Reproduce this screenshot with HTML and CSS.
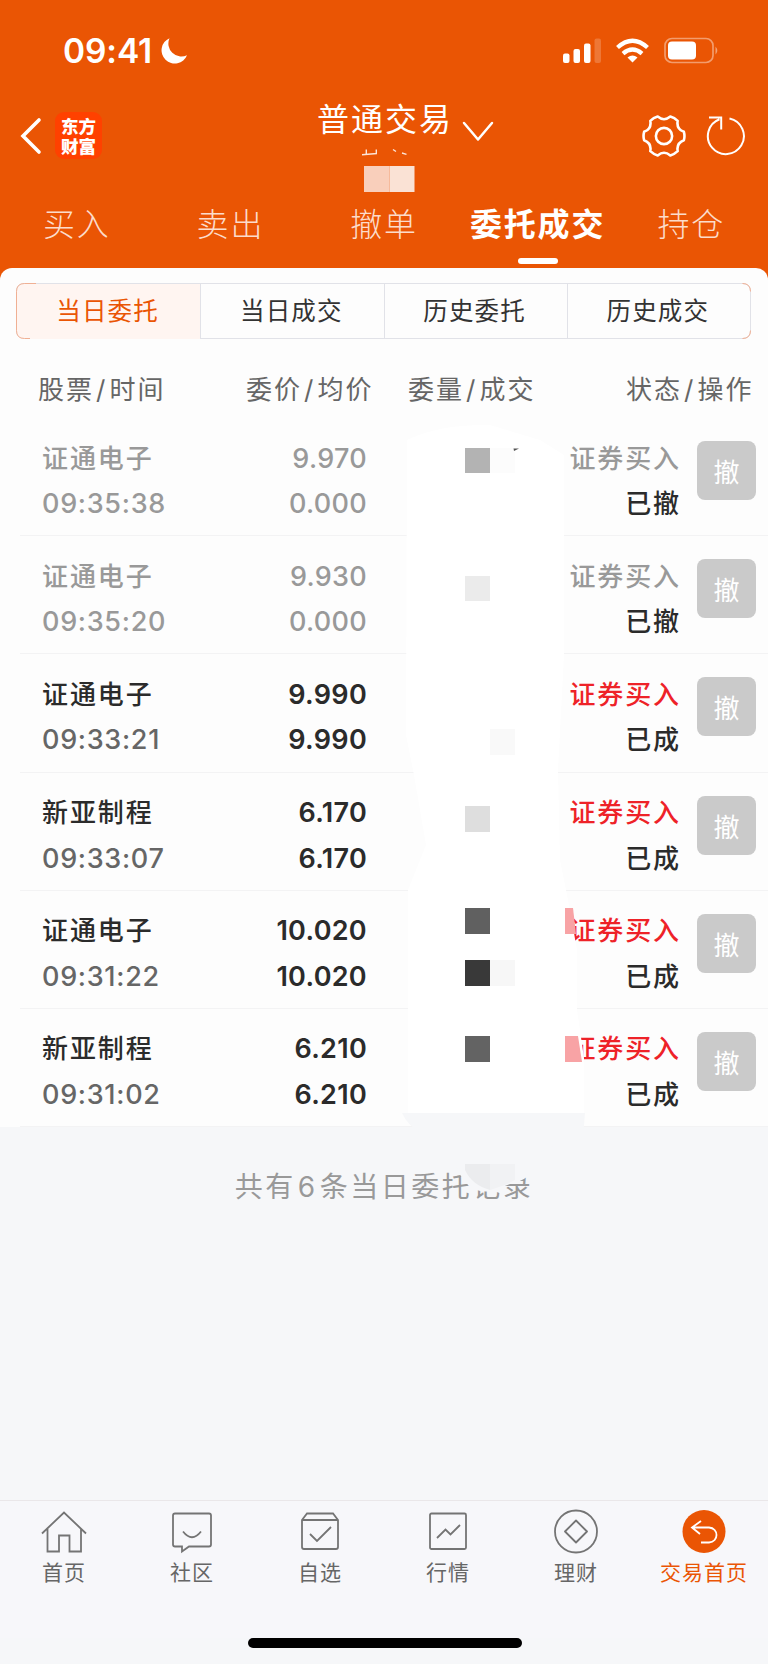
FILE: index.html
```html
<!DOCTYPE html>
<html lang="zh-CN">
<head>
<meta charset="utf-8">
<title>普通交易</title>
<link rel="stylesheet" href="styles.css">
</head>
<body>
<div class="app">
  <header class="top">
    <div class="status">
      <span class="clock">09:41</span>
      <svg class="moon" width="28" height="28" viewBox="0 0 28 28"><path d="M9.5 1.2A13.2 13.2 0 1 0 27 18.200A13 13 0 0 1 9.500 1.200Z" fill="#fff"/></svg>
      <svg class="signals" width="160" height="28" viewBox="0 0 160 28">
        <g fill="#fff">
          <rect x="3" y="16.500" width="6.500" height="9.500" rx="2"/>
          <rect x="13.500" y="12" width="6.500" height="14" rx="2"/>
          <rect x="24" y="6.500" width="6.500" height="19.500" rx="2"/>
          <rect x="34.500" y="1.500" width="6.500" height="24.500" rx="2" opacity=".2"/>
          <path d="M72.500 25.500L67.500 20.500Q72.500 16.300 77.500 20.500Z"/>
        </g>
        <g fill="none" stroke="#fff" stroke-width="4.300">
          <path d="M57.500 10.500Q72.500-3 87.500 10.500"/>
          <path d="M63 16.600Q72.500 8.500 82 16.600"/>
        </g>
        <rect x="105" y="1.500" width="48" height="24" rx="7" fill="none" stroke="#fff" stroke-width="1.700" opacity=".42"/>
        <rect x="108" y="4.500" width="28" height="18" rx="4" fill="#fff"/>
        <path d="M155.500 9.500Q159 13.500 155.500 17.500Z" fill="#fff" opacity=".45"/>
      </svg>
    </div>
    <div class="nav">
      <svg class="back" width="22" height="38" viewBox="0 0 22 38"><path d="M19 3L3 19L19 35" fill="none" stroke="#fff" stroke-width="3.600" stroke-linecap="round"/></svg>
      <div class="logo">东方<br>财富</div>
      <div class="title">
        <span>普通交易</span>
        <svg width="32" height="22" viewBox="0 0 32 22"><path d="M2 2L16 18.500L30 2" fill="none" stroke="#fff" stroke-width="2.500" stroke-linecap="round" stroke-linejoin="round"/></svg>
      </div>
      <svg class="gear" width="44" height="44" viewBox="0 0 46 46"><g fill="none" stroke="#fff" stroke-width="2.700" stroke-linejoin="round"><circle cx="23" cy="23" r="8.500"/><path d="M43.800 18.600Q45 23 43.800 27.400Q35.800 30.400 37.300 38.800Q34 42 29.600 43.300Q23 37.800 16.400 43.300Q12 42 8.700 38.800Q10.200 30.400 2.200 27.400Q1 23 2.200 18.600Q10.200 15.600 8.700 7.200Q12 4 16.400 2.700Q23 8.200 29.600 2.700Q34 4 37.300 7.200Q35.800 15.600 43.800 18.600Z"/></g></svg>
      <svg class="refresh" width="42" height="42" viewBox="0 0 42 42"><path d="M24.500 3.500A18 18 0 1 1 14.500 4.300M4 2.500H16.200V14.500" fill="none" stroke="#fff" stroke-width="2"/></svg>
    </div>
    <nav class="tabs">
      <span class="tab">买入</span><span class="tab">卖出</span><span class="tab">撤单</span><span class="tab on">委托成交</span><span class="tab">持仓</span>
    </nav>
  </header>
  <main class="sheet">
    <div class="segments">
      <span class="seg on">当日委托</span><span class="seg">当日成交</span><span class="seg">历史委托</span><span class="seg">历史成交</span>
      <svg class="corners" width="735" height="56" viewBox="0 0 735 56"><path d="M20 .5H8.500Q.5 .5 .5 8.500V47.500Q.5 55.500 8.500 55.500H14M726.500 .5Q734.500 .5 734.500 8.500M734.500 47.500Q734.500 55.500 726.500 55.500" fill="none" stroke="#f0b094"/></svg>
    </div>
    <div class="head"><span>股票<i>/</i>时间</span><span>委价<i>/</i>均价</span><span>委量<i>/</i>成交</span><span>状态<i>/</i>操作</span></div>
    <div class="row off"><div class="name">证通电子<b>09:35:38</b></div><div class="price">9.970<b>0.000</b></div><div class="state">证券买入<b>已撤</b></div><button class="cancel">撤</button></div>
    <div class="row off"><div class="name">证通电子<b>09:35:20</b></div><div class="price">9.930<b>0.000</b></div><div class="state">证券买入<b>已撤</b></div><button class="cancel">撤</button></div>
    <div class="row"><div class="name">证通电子<b>09:33:21</b></div><div class="price">9.990<b>9.990</b></div><div class="state">证券买入<b>已成</b></div><button class="cancel">撤</button></div>
    <div class="row"><div class="name">新亚制程<b>09:33:07</b></div><div class="price">6.170<b>6.170</b></div><div class="state">证券买入<b>已成</b></div><button class="cancel">撤</button></div>
    <div class="row"><div class="name">证通电子<b>09:31:22</b></div><div class="price">10.020<b>10.020</b></div><div class="state">证券买入<b>已成</b></div><button class="cancel">撤</button></div>
    <div class="row"><div class="name">新亚制程<b>09:31:02</b></div><div class="price">6.210<b>6.210</b></div><div class="state">证券买入<b>已成</b></div><button class="cancel">撤</button></div>
  </main>
  <p class="total">共有<i>6</i>条当日委托记录</p>
  <footer class="bar">
    <div class="item"><svg width="48" height="48" viewBox="0 0 48 48"><path d="M2 24.500L24 3.500L46 24.500M7.500 20V42.500H19V26.500H29.500V42.500H41V20"/></svg>首页</div>
    <div class="item"><svg width="48" height="48" viewBox="0 0 48 48"><path d="M7 4.500H41Q43 4.500 43 6.500V35.500Q43 37.500 41 37.500H21L14 42.500V37.500H7Q5 37.500 5 35.500V6.500Q5 4.500 7 4.500ZM15 22.500Q24 34 33 22.500"/></svg>社区</div>
    <div class="item"><svg width="48" height="48" viewBox="0 0 48 48"><path d="M6 11L11 4.500H37L42 11V38Q42 40 40 40H8Q6 40 6 38ZM6 11H42M14 25L21 32L35 18"/></svg>自选</div>
    <div class="item"><svg width="48" height="48" viewBox="0 0 48 48"><rect x="6" y="4.500" width="36" height="35.500" rx="1.500"/><path d="M13 29L21.500 20.500L26.500 25.500L36 16"/></svg>行情</div>
    <div class="item"><svg width="48" height="48" viewBox="0 0 48 48"><circle cx="24" cy="22.500" r="21"/><path d="M24 11.500L35 22.500L24 33.500L13 22.500Z" stroke-linejoin="round"/></svg>理财</div>
    <div class="item on"><svg width="48" height="48" viewBox="0 0 48 48"><circle cx="24" cy="22.500" r="21.500" fill="#ea5504" stroke="none"/><path d="M21 12L12 18.500L20 25M12.500 18.500H29C39 19 39 33 29 33.500H21" stroke="#fff"/></svg>交易首页</div>
  </footer>
  <div class="homebar"></div>
  <svg class="redaction" width="768" height="1240" viewBox="0 0 768 1240">
    <path d="M362 154.800L377 153.500M366.300 149.500V154M376.300 149.500V153.500M393 149.500L396 151.500M402 153L406.500 154.300" stroke="#fff" stroke-width="1.400" fill="none" opacity=".85"/>
    <rect x="364" y="166" width="25.500" height="26" fill="#f9cfbb"/><rect x="389.500" y="166" width="25" height="26" fill="#fae2d5"/>
    <path d="M407 440Q440 424 490 425L540 440L564 455V655L558 770L560 860L568 900L577 950V1010L584 1058V1114H408V890L426 845L414 775L406 735Z" fill="#fff"/>
    <path d="M402 1113H585L583 1137C564 1150 545 1142 540 1155C535 1176 521 1182 510 1184L492 1191C470 1195 455 1177 452 1145C425 1137 410 1130 402 1113Z" fill="#f6f7f9"/>
    <rect x="465" y="448" width="25" height="25" fill="#b3b3b3"/><rect x="490" y="448" width="25" height="25" fill="#fcfcfc"/>
    <path d="M513.500 448.500H519L514 451Z" fill="#555"/>
    <rect x="465" y="576" width="25" height="25" fill="#ebebeb"/>
    <rect x="490" y="729" width="25" height="26" fill="#f9f9f9"/>
    <rect x="465" y="806" width="25" height="26" fill="#dedede"/>
    <rect x="465" y="908" width="25" height="26" fill="#606060"/>
    <rect x="465" y="960" width="25" height="26" fill="#393939"/><rect x="490" y="960" width="25" height="26" fill="#f7f7f7"/>
    <rect x="465" y="1036" width="25" height="26" fill="#636363"/>
    <path d="M565 908H573L576 934H565Z" fill="#f8a3a5"/><path d="M565 1036H578L582 1062H565Z" fill="#f8a3a5"/>
    <path d="M465 1164H490V1190Q472 1185 465 1170Z" fill="#ebecee"/><path d="M490 1164H515V1180L505 1185L490 1190Z" fill="#f1f2f4"/>
  </svg>
</div>
</body>
</html>
```
FILE: styles.css
```css
* { box-sizing: border-box; }
body { margin: 0; background: #f6f7f9; font-family: Inter, "Noto Sans CJK SC", sans-serif; }
i, b { font-style: normal; font-weight: inherit; }
svg { display: block; flex: none; }
.app { position: relative; width: 768px; height: 1664px; overflow: hidden; display: flex; flex-direction: column; }

.top { height: 280px; background: #ea5504; color: #fff; flex: none; }
.status { height: 100px; padding: 37px 48px 0 63px; display: flex; align-items: flex-start; }
.clock { font-size: 33.500px; font-weight: 600; line-height: 28px; width: 97px; letter-spacing: -.1px; }
.signals { margin-left: auto; }
.nav { height: 92px; display: flex; padding-left: 20px; align-items: flex-start; }
.back { margin-top: 17px; }
.logo { width: 47px; height: 47px; margin: 12px 0 0 13px; padding-top: 4px; border-radius: 9px; background: #ff4100; text-align: center; font: 900 17.500px/19.500px "Noto Sans CJK SC", sans-serif; }
.title { display: flex; width: 177px; margin-left: 215px; font-size: 32px; letter-spacing: 2px; line-height: 40px; justify-content: space-between; white-space: nowrap; }
.title svg { margin-top: 21px; }
.gear { margin: 14px 0 0 148px; }
.refresh { margin: 15px 0 0 19px; }
.tabs { display: grid; grid-template-columns: repeat(5, 1fr); }
.tab { height: 75px; font-size: 32px; line-height: 65px; letter-spacing: 1.800px; text-align: center; font-weight: 300; color: #fcdccb; }
.tab.on { font-weight: 700; color: #fff; display: flex; flex-direction: column; align-items: center; }
.tab.on::after { content: ""; width: 40px; height: 6px; border-radius: 3px; background: #fff; margin-top: 1px; }

.sheet { flex: none; margin-top: -12px; height: 859px; background: #fdfdfd; border-radius: 12px 12px 0 0; padding-top: 15px; }
.segments { position: relative; display: grid; grid-template-columns: repeat(4, 1fr); width: 735px; height: 56px; margin-left: 16px; border: 1px solid #e1e2e8; border-radius: 8px; }
.corners { position: absolute; left: -1px; top: -1px; }
.seg { text-align: center; font-size: 24.500px; line-height: 55px; letter-spacing: 1.200px; color: #333; padding-right: 2px; }
.seg + .seg { border-left: 1px solid #e1e2e8; }
.seg.on { background: #fff5f1; color: #ea5504; border-radius: 7px 0 0 7px; }
.head { display: grid; grid-template-columns: 208px 162px 218px 1fr; padding-left: 38px; height: 79px; line-height: 102px; font-size: 26px; letter-spacing: 2px; color: #666; white-space: nowrap; }
.head i { margin: 0 2px; }
.row { height: 118.200px; display: grid; grid-template-columns: 165px 160px 314px 75px; margin-left: 20px; padding: 17.500px 0 0 22px; border-bottom: 1px solid #f3f3f4; font-size: 26px; line-height: 45.500px; color: #2b2b2b; font-weight: 500; }
.row b { display: block; white-space: nowrap; }
.name { letter-spacing: 1.900px; }
.name b { letter-spacing: .7px; color: #666; font-size: 27px; }
.price { text-align: right; letter-spacing: .3px; font-size: 27px; font-weight: 600; }
.state { text-align: right; letter-spacing: 1.900px; color: #ee2228; }
.state b { color: #2b2b2b; }
.off, .off .name b, .off .state { color: #999; }
.off .price { font-weight: 500; }
.cancel { width: 59px; height: 59px; margin: 5.500px 0 0 16px; padding: 0; border: 0; border-radius: 8px; background: #cacaca; color: #fff; font: 400 26px/57px "Noto Sans CJK SC", sans-serif; }
.total { margin: 39px 0 0; height: 334px; text-align: center; font-size: 28px; line-height: 43px; letter-spacing: 2.500px; color: #999; }
.total i { margin: 0 2px; }

.bar { flex: none; height: 138px; display: grid; grid-template-columns: repeat(6, 1fr); border-top: 1px solid #eae7e9; background: #f7f7fa; padding-top: 8px; }
.item { display: flex; flex-direction: column; align-items: center; font-size: 21px; line-height: 30px; letter-spacing: 1px; color: #666; white-space: nowrap; }
.item svg { margin-bottom: 1px; fill: none; stroke: #747474; stroke-width: 1.800; }
.item.on { color: #ea5504; }
.homebar { flex: none; width: 274px; height: 10px; border-radius: 5px; background: #000; margin-left: 248px; }
.redaction { position: absolute; left: 0; top: 0; pointer-events: none; }
```
